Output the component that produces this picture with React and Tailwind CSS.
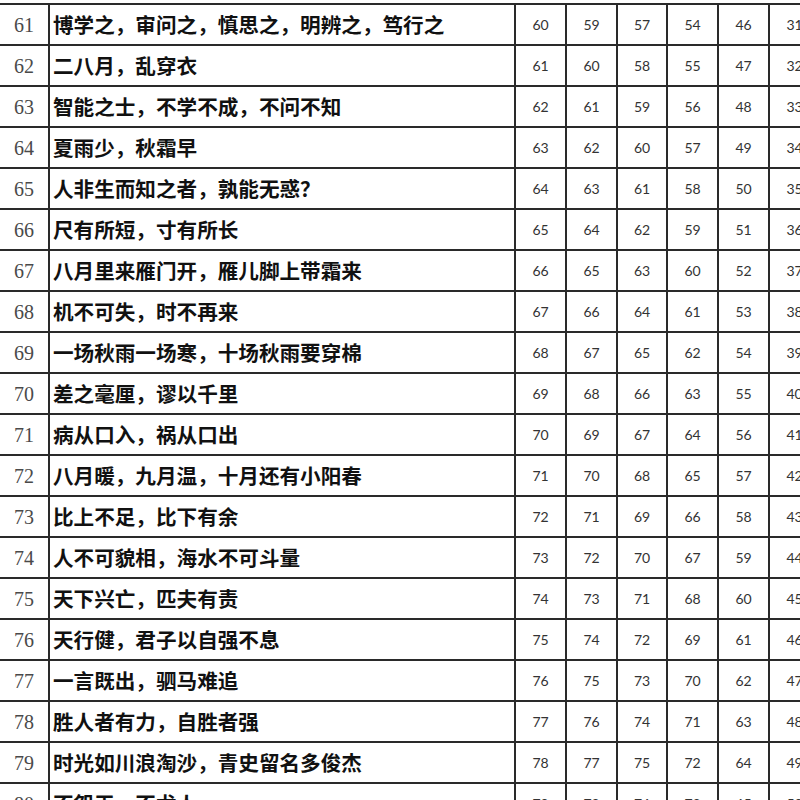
import React from 'react';

const rows = [
  [61, '博学之，审问之，慎思之，明辨之，笃行之', [60, 59, 57, 54, 46, 31]],
  [62, '二八月，乱穿衣', [61, 60, 58, 55, 47, 32]],
  [63, '智能之士，不学不成，不问不知', [62, 61, 59, 56, 48, 33]],
  [64, '夏雨少，秋霜早', [63, 62, 60, 57, 49, 34]],
  [65, '人非生而知之者，孰能无惑？', [64, 63, 61, 58, 50, 35]],
  [66, '尺有所短，寸有所长', [65, 64, 62, 59, 51, 36]],
  [67, '八月里来雁门开，雁儿脚上带霜来', [66, 65, 63, 60, 52, 37]],
  [68, '机不可失，时不再来', [67, 66, 64, 61, 53, 38]],
  [69, '一场秋雨一场寒，十场秋雨要穿棉', [68, 67, 65, 62, 54, 39]],
  [70, '差之毫厘，谬以千里', [69, 68, 66, 63, 55, 40]],
  [71, '病从口入，祸从口出', [70, 69, 67, 64, 56, 41]],
  [72, '八月暖，九月温，十月还有小阳春', [71, 70, 68, 65, 57, 42]],
  [73, '比上不足，比下有余', [72, 71, 69, 66, 58, 43]],
  [74, '人不可貌相，海水不可斗量', [73, 72, 70, 67, 59, 44]],
  [75, '天下兴亡，匹夫有责', [74, 73, 71, 68, 60, 45]],
  [76, '天行健，君子以自强不息', [75, 74, 72, 69, 61, 46]],
  [77, '一言既出，驷马难追', [76, 75, 73, 70, 62, 47]],
  [78, '胜人者有力，自胜者强', [77, 76, 74, 71, 63, 48]],
  [79, '时光如川浪淘沙，青史留名多俊杰', [78, 77, 75, 72, 64, 49]],
  [80, '不怨天，不尤人', [79, 78, 76, 73, 65, 50]],
];

// widths of the number columns, borders included
const numWidths = ['w-[51px]', 'w-[51px]', 'w-[50px]', 'w-[51px]', 'w-[51px]', 'w-[51px]'];

function Row({ no, text, nums }) {
  return (
    <div className="flex h-[41px] border-b-2 border-[#2a2a2a]">
      <div className="w-[50px] shrink-0 border-r-2 border-[#2a2a2a] flex items-center justify-center text-[20px] text-[#4a4a4a] font-['Liberation_Serif',serif]">
        {no}
      </div>
      <div className="w-[466px] shrink-0 border-r-2 border-[#2a2a2a] flex items-center pl-[3px] text-[20.6px] font-bold text-[#111] font-['Noto_Sans_CJK_SC',sans-serif] whitespace-nowrap">
        {text}
      </div>
      {nums.map((n, i) => (
        <div
          key={i}
          className={`${numWidths[i]} shrink-0 border-r-2 border-[#2a2a2a] flex items-center justify-center text-[14px] text-[#333] font-['Lato',sans-serif]`}
        >
          {n}
        </div>
      ))}
    </div>
  );
}

export default function App() {
  return (
    <div className="w-[800px] h-[800px] overflow-hidden bg-white">
      <div className="w-[900px] mt-[3px] border-t-2 border-[#2a2a2a]">
        {rows.map(([no, text, nums]) => (
          <Row key={no} no={no} text={text} nums={nums} />
        ))}
      </div>
    </div>
  );
}
